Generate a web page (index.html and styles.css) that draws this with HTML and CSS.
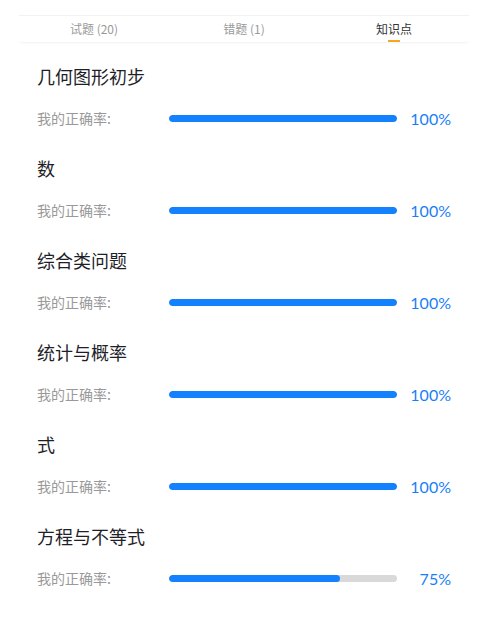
FILE: index.html
```html
<!DOCTYPE html>
<html lang="zh-CN">
<head>
  <meta charset="UTF-8" />
  <meta name="viewport" content="width=device-width, initial-scale=1.0"/>
  <title>知识点</title>
  <link rel="stylesheet" href="styles.css">
</head>
<body>

<!-- Tabs -->
<div class="tabs">
  <div class="tab">试题 (20)</div>
  <div class="tab">错题 (1)</div>
  <div class="tab active">知识点</div>
</div>

<!-- Knowledge points -->
<div class="list">
  <div class="point">
    <div class="point-title">几何图形初步</div>
    <div class="point-row">
      <span class="point-label">我的正确率:</span>
      <div class="bar"><div class="bar-fill" style="width:100%"></div></div>
      <span class="point-rate">100%</span>
    </div>
  </div>

  <div class="point">
    <div class="point-title">数</div>
    <div class="point-row">
      <span class="point-label">我的正确率:</span>
      <div class="bar"><div class="bar-fill" style="width:100%"></div></div>
      <span class="point-rate">100%</span>
    </div>
  </div>

  <div class="point">
    <div class="point-title">综合类问题</div>
    <div class="point-row">
      <span class="point-label">我的正确率:</span>
      <div class="bar"><div class="bar-fill" style="width:100%"></div></div>
      <span class="point-rate">100%</span>
    </div>
  </div>

  <div class="point">
    <div class="point-title">统计与概率</div>
    <div class="point-row">
      <span class="point-label">我的正确率:</span>
      <div class="bar"><div class="bar-fill" style="width:100%"></div></div>
      <span class="point-rate">100%</span>
    </div>
  </div>

  <div class="point">
    <div class="point-title">式</div>
    <div class="point-row">
      <span class="point-label">我的正确率:</span>
      <div class="bar"><div class="bar-fill" style="width:100%"></div></div>
      <span class="point-rate">100%</span>
    </div>
  </div>

  <div class="point">
    <div class="point-title">方程与不等式</div>
    <div class="point-row">
      <span class="point-label">我的正确率:</span>
      <div class="bar"><div class="bar-fill" style="width:75%"></div></div>
      <span class="point-rate">75%</span>
    </div>
  </div>
</div>

</body>
</html>
```

FILE: styles.css
```css
body {
  margin: 0;
  background: #fff;
  font-family: "Noto Sans CJK SC", "Noto Sans", sans-serif;
}

/* Tabs */
.tabs {
  display: flex;
  width: 450px;
  margin: 15px 0 0 19px;
  height: 26px;
  border-top: 1px solid #f2f2f2;
  box-shadow: 0 2px 2px -1px rgba(0, 0, 0, 0.06);
}

.tab {
  flex: 1;
  text-align: center;
  font-size: 12px;
  line-height: 25px;
  color: #9a9a9a;
  position: relative;
}

.tab.active {
  color: #333;
}

.tab.active::after {
  content: "";
  position: absolute;
  left: 50%;
  bottom: 0;
  width: 12px;
  height: 2px;
  margin-left: -6px;
  background: #f5a623;
}

/* Knowledge points */
.list {
  width: 450px;
  margin: 22px 0 0 19px;
}

.point {
  padding: 0 18px 26px;
}

.point-title {
  font-size: 18px;
  line-height: 24px;
  color: #1f1f2a;
  margin-bottom: 18px;
}

.point-row {
  display: flex;
  align-items: center;
  height: 24px;
}

.point-label {
  width: 132px;
  font-size: 14px;
  color: #999;
}

.bar {
  width: 228px;
  height: 7px;
  border-radius: 4px;
  background: #d9d9d9;
  overflow: hidden;
}

.bar-fill {
  height: 100%;
  border-radius: 4px;
  background: #1482ff;
}

.point-rate {
  flex: 1;
  text-align: right;
  font-family: "Lato", "Noto Sans", sans-serif;
  font-size: 16px;
  color: #1a7ff7;
}
```
